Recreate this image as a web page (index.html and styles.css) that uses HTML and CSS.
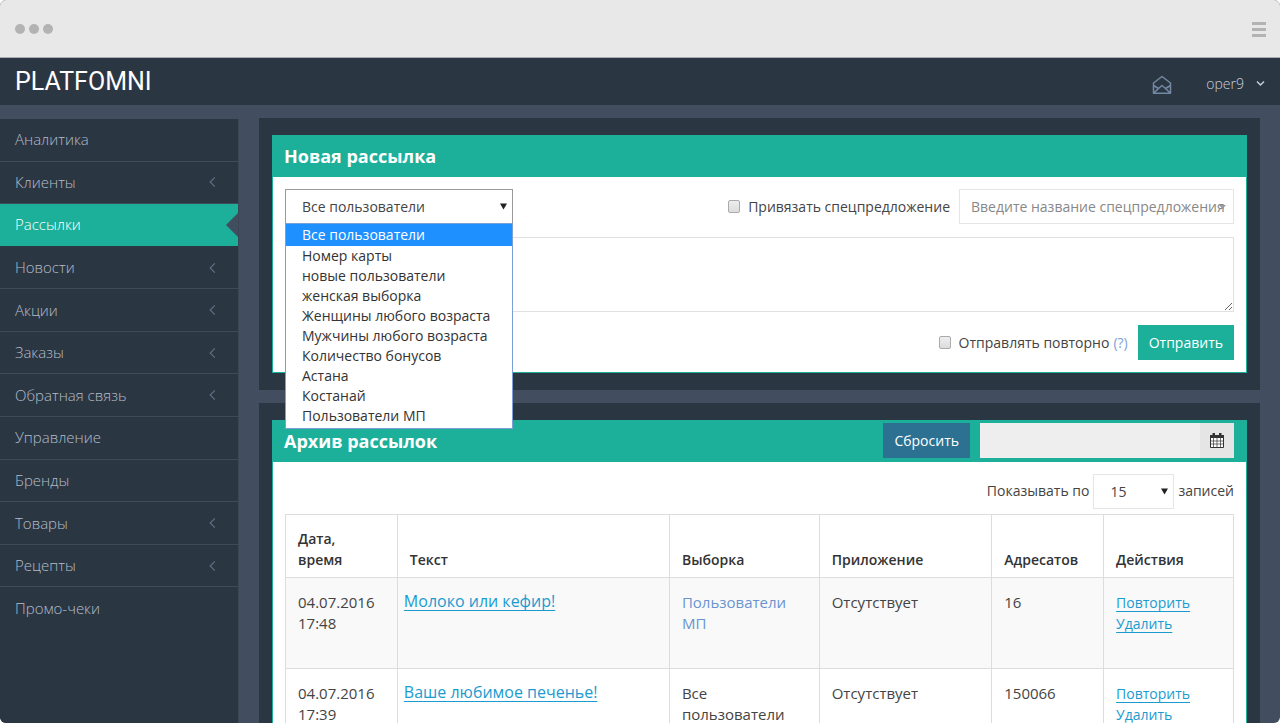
FILE: index.html
```html
<!DOCTYPE html>
<html lang="ru">
<head>
<meta charset="utf-8">
<title>PLATFOMNI</title>
<link rel="stylesheet" href="styles.css">
</head>
<body>
<div class="window">
  <div class="chrome">
    <div class="dots"><span class="dot"></span><span class="dot"></span><span class="dot"></span></div>
    <div class="bars"><span class="bar"></span><span class="bar"></span><span class="bar"></span></div>
  </div>
  <header class="topbar">
    <a class="logo" href="#">PLATFOMNI</a>
    <div class="account">
      <a class="mail" href="#" aria-label="Сообщения">
        <svg width="20" height="20" viewBox="0 0 20 20" fill="none" stroke="#7488a3" stroke-width="1.5" stroke-linejoin="round"><path d="M1.500 8 L10 1.500 L18.500 8 V18.300 H1.500 Z M1.500 10.500 L6.500 13.500 L10 10.500 L13.500 13.500 L18.500 10.500 M6.500 13.500 L1.800 18 M13.500 13.500 L18.200 18"/></svg>
      </a>
      <button class="user" type="button">oper9
        <svg width="9" height="7" viewBox="0 0 9 7" fill="none" stroke="#c6cfda" stroke-width="1.500"><path d="M1 1.500 L4.500 5 L8 1.500"/></svg>
      </button>
    </div>
  </header>
  <div class="page">
    <nav class="sidebar">
      <ul class="menu">
        <li class="menu-item"><a href="#">Аналитика</a></li>
        <li class="menu-item sub"><a href="#">Клиенты</a></li>
        <li class="menu-item active"><a href="#">Рассылки</a></li>
        <li class="menu-item sub"><a href="#">Новости</a></li>
        <li class="menu-item sub"><a href="#">Акции</a></li>
        <li class="menu-item sub"><a href="#">Заказы</a></li>
        <li class="menu-item sub"><a href="#">Обратная связь</a></li>
        <li class="menu-item"><a href="#">Управление</a></li>
        <li class="menu-item"><a href="#">Бренды</a></li>
        <li class="menu-item sub"><a href="#">Товары</a></li>
        <li class="menu-item sub"><a href="#">Рецепты</a></li>
        <li class="menu-item"><a href="#">Промо-чеки</a></li>
      </ul>
    </nav>
    <main class="content">
      <section class="panel">
        <div class="portlet">
          <div class="portlet-head"><h2>Новая рассылка</h2></div>
          <form class="portlet-body mailing">
            <div class="row">
              <div class="picker">
                <select class="field audience" aria-label="Получатели">
                  <option>Все пользователи</option>
                  <option>Номер карты</option>
                </select>
                <svg class="arrow" width="7" height="7" viewBox="0 0 7 7"><path d="M0 0.500 H7 L3.500 6.500 Z" fill="#222"/></svg>
                <ul class="options" role="listbox" aria-label="Получатели">
                  <li class="option selected" role="option" aria-selected="true">Все пользователи</li>
                  <li class="option" role="option">Номер карты</li>
                  <li class="option" role="option">новые пользователи</li>
                  <li class="option" role="option">женская выборка</li>
                  <li class="option" role="option">Женщины любого возраста</li>
                  <li class="option" role="option">Мужчины любого возраста</li>
                  <li class="option" role="option">Количество бонусов</li>
                  <li class="option" role="option">Астана</li>
                  <li class="option" role="option">Костанай</li>
                  <li class="option" role="option">Пользователи МП</li>
                </ul>
              </div>
              <div class="offer">
                <label class="check"><input type="checkbox"> Привязать спецпредложение</label>
                <div class="offer-box">
                  <input class="field offer-name" type="text" aria-label="Название спецпредложения" placeholder="Введите название спецпредложения">
                  <svg class="offer-arrow" width="7" height="4" viewBox="0 0 7 4"><path d="M0 0 H7 L3.500 4 Z" fill="#999"/></svg>
                </div>
              </div>
            </div>
            <textarea class="message" aria-label="Текст рассылки"></textarea>
            <div class="row end">
              <label class="check"><input type="checkbox"> Отправлять повторно</label>
              <a class="hint" href="#">(?)</a>
              <button class="btn send" type="button">Отправить</button>
            </div>
          </form>
        </div>
      </section>
      <section class="panel">
        <div class="portlet">
          <div class="portlet-head">
            <h2>Архив рассылок</h2>
            <div class="filters">
              <button class="btn reset" type="button">Сбросить</button>
              <div class="dates">
                <input class="dates-input" type="text" aria-label="Период" readonly>
                <button class="dates-btn" type="button" aria-label="Выбрать период">
                  <svg width="14" height="15" viewBox="0 0 14 15"><path d="M0.500 3 H13.500 V14.500 H0.500 Z" fill="#fff" stroke="#333"/><path d="M0 2 H14 V5 H0 Z M2.500 0 H5 V4 H2.500 Z M9 0 H11.500 V4 H9 Z" fill="#333"/><path d="M3.500 5 V14 M7 5 V14 M10.500 5 V14 M1 8 H13 M1 11 H13" stroke="#333" stroke-width="0.700"/></svg>
                </button>
              </div>
            </div>
          </div>
          <div class="portlet-body archive">
            <div class="length">
              <label for="per-page">Показывать по</label>
              <div class="picker">
                <select class="field per-page" id="per-page"><option>15</option><option>30</option></select>
                <svg class="arrow" width="7" height="7" viewBox="0 0 7 7"><path d="M0 0.500 H7 L3.500 6.500 Z" fill="#222"/></svg>
              </div>
              <span>записей</span>
            </div>
            <table class="table">
              <colgroup><col class="c-date"><col class="c-text"><col class="c-group"><col class="c-app"><col class="c-count"><col class="c-act"></colgroup>
              <thead>
                <tr><th>Дата, время</th><th>Текст</th><th>Выборка</th><th>Приложение</th><th>Адресатов</th><th>Действия</th></tr>
              </thead>
              <tbody>
                <tr>
                  <td>04.07.2016 17:48</td>
                  <td class="subject"><a class="link" href="#">Молоко или кефир!</a></td>
                  <td><a class="group" href="#">Пользователи МП</a></td>
                  <td>Отсутствует</td>
                  <td>16</td>
                  <td class="actions"><a class="link" href="#">Повторить</a><br><a class="link" href="#">Удалить</a></td>
                </tr>
                <tr>
                  <td>04.07.2016 17:39</td>
                  <td class="subject"><a class="link" href="#">Ваше любимое печенье!</a></td>
                  <td>Все пользователи</td>
                  <td>Отсутствует</td>
                  <td>150066</td>
                  <td class="actions"><a class="link" href="#">Повторить</a><br><a class="link" href="#">Удалить</a></td>
                </tr>
              </tbody>
            </table>
          </div>
        </div>
      </section>
    </main>
  </div>
</div>
</body>
</html>
```
FILE: styles.css
```css
* { box-sizing: border-box; }
body {
  margin: 0;
  background: #fff;
  color: #444;
  font: 14px/21px "Open Sans", "Noto Sans", sans-serif;
}
button, input, select, textarea { font: inherit; color: inherit; }
a { text-decoration: none; color: inherit; }
ul { list-style: none; margin: 0; padding: 0; }

.window {
  display: flex;
  flex-direction: column;
  height: 100vh;
  overflow: hidden;
  border-radius: 6px;
  background: #424e5f;
}

.chrome {
  display: flex;
  flex: none;
  align-items: center;
  justify-content: space-between;
  height: 58px;
  padding: 1px 14px 0 15px;
  background: #e8e8e8;
  border-bottom: 1px solid #a9adb2;
}
.dots { display: flex; gap: 4px; }
.dot { width: 10px; height: 10px; border-radius: 50%; background: #b3b3b3; }
.bars { display: grid; gap: 3px; padding-top: 1px; }
.bar { width: 14px; height: 3px; background: #b3b3b3; }

.topbar {
  display: flex;
  flex: none;
  align-items: center;
  justify-content: space-between;
  height: 47px;
  padding: 0 15px;
  background: #2b3643;
}
.logo { padding-top: 1px; font: 25px/32px Roboto, sans-serif; color: #fff; }
.account { display: flex; align-items: center; gap: 34px; padding-top: 4px; }
.mail { display: flex; padding-top: 2px; }
.user {
  display: flex;
  align-items: center;
  gap: 12px;
  padding: 0;
  border: 0;
  background: none;
  color: #c6cfda;
  font-weight: 300;
}

.page { display: flex; flex: 1; min-height: 0; gap: 20px; padding: 13px 20px 0 0; }
.sidebar { flex: 0 0 239px; margin-top: 1px; background: #2b3643; border-right: 1px solid #3a4756; }
.menu { display: grid; grid-auto-rows: 1fr; height: 511px; }
.menu-item {
  position: relative;
  display: grid;
  align-items: center;
  border-bottom: 1px solid #3f4b5a;
  color: #b4bcc8;
  font-size: 15px;
  font-weight: 300;
}
.menu-item:last-child { border-bottom: 0; }
.menu-item a { padding: 0 15px; }
.menu-item.sub::after {
  content: "";
  position: absolute;
  top: 50%;
  right: 20px;
  width: 6px;
  height: 6px;
  border: solid #66758a;
  border-width: 0 0 1px 1px;
  transform: translateY(-50%) rotate(45deg);
}
.menu-item.active { background: #1caf9a; border-color: #2b3643; color: #fff; }
.menu-item.active::after {
  content: "";
  position: absolute;
  top: 50%;
  right: 0;
  border: 12px solid transparent;
  border-left-width: 0;
  border-right-color: #424e5f;
  transform: translateY(-50%);
}

.content { display: flex; flex: 1; flex-direction: column; gap: 13px; min-width: 0; }
.panel { flex: none; padding: 17px 13px; background: #2b3643; }
.portlet { background: #fff; border: 1px solid #1caf9a; }
.portlet-head {
  display: flex;
  align-items: center;
  justify-content: space-between;
  min-height: 41px;
  padding: 0 12px 2px 11px;
  background: #1caf9a;
}
.portlet-head h2 { margin: 0; color: #fff; font-size: 18px; line-height: 26px; }
.portlet-body { padding: 12px; }

.mailing { display: grid; gap: 13px; }
.row { display: flex; align-items: center; justify-content: space-between; }
.row.end { justify-content: flex-end; gap: 4px; }
.picker { position: relative; }
.field {
  display: block;
  height: 35px;
  border: 1px solid #e5e5e5;
  border-radius: 0;
  background: #fff;
  appearance: none;
  outline: 0;
}
.audience { width: 228px; padding: 0 16px; border-color: #999; }
.arrow { position: absolute; top: 14px; right: 6px; pointer-events: none; }
.options {
  position: absolute;
  top: 34px;
  left: 0;
  right: 0;
  z-index: 1;
  padding-bottom: 2px;
  border: 1px solid #7c9fd6;
  background: #fff;
  color: #333;
}
.option { padding: 0 16px; line-height: 20px; }
.option.selected { background: #1e90ff; color: #fff; line-height: 22px; }
.offer { display: flex; align-items: center; gap: 9px; }
.check { display: flex; align-items: center; gap: 8px; }
.check input {
  width: 12px;
  height: 13px;
  margin: 0;
  border: 1px solid #aaa;
  border-radius: 2px;
  background: linear-gradient(#eee, #dcdcdc);
  appearance: none;
}
.offer-box { position: relative; }
.offer-name { width: 275px; padding: 0 4px 0 11px; }
.offer-name::placeholder { color: #888; opacity: 1; }
.offer-arrow { position: absolute; top: 16px; right: 8px; }
.message { display: block; width: 100%; height: 75px; border: 1px solid #e0e0e0; resize: vertical; }
.hint { color: #7ba3d9; }
.btn { height: 35px; padding: 0 11px; border: 0; color: #fff; }
.send { margin-left: 6px; background: #1caf9a; }
.reset { background: #2c7092; }

.filters { display: flex; gap: 10px; }
.dates { display: flex; width: 254px; height: 35px; background: #eee; }
.dates-input { flex: 1; min-width: 0; border: 0; background: #eee; }
.dates-btn {
  display: flex;
  align-items: center;
  justify-content: center;
  width: 34px;
  padding: 0;
  border: 0;
  background: #e5e5e5;
}

.archive { display: grid; gap: 5px; }
.length { display: flex; align-items: center; justify-content: flex-end; gap: 4px; }
.length label, .length span { padding-bottom: 2px; }
.per-page { width: 81px; padding: 0 16px; }
.table { width: 100%; table-layout: fixed; border-collapse: collapse; }
.c-date, .c-count { width: 11.8%; }
.c-text { width: 28.7%; }
.c-group { width: 15.8%; }
.c-app { width: 18.2%; }
.c-act { width: 13.7%; }
.table th, .table td { border: 1px solid #ddd; text-align: left; }
.table th { padding: 13px 18px 7px 12px; color: #333; font-weight: 600; vertical-align: bottom; }
.table td { height: 91px; padding: 14px 18px 0 12px; font-size: 15px; vertical-align: top; }
.table tbody tr:nth-child(odd) { background: #f9f9f9; }
.table .subject { padding: 13px 6px 0; font-size: 16px; }
.table .actions { font-size: 14px; }
.link {
  color: #1b9bd0;
  text-decoration: underline 1px;
  text-underline-offset: 3px;
  text-decoration-skip-ink: none;
}
.group { color: #6a94cf; }
```
